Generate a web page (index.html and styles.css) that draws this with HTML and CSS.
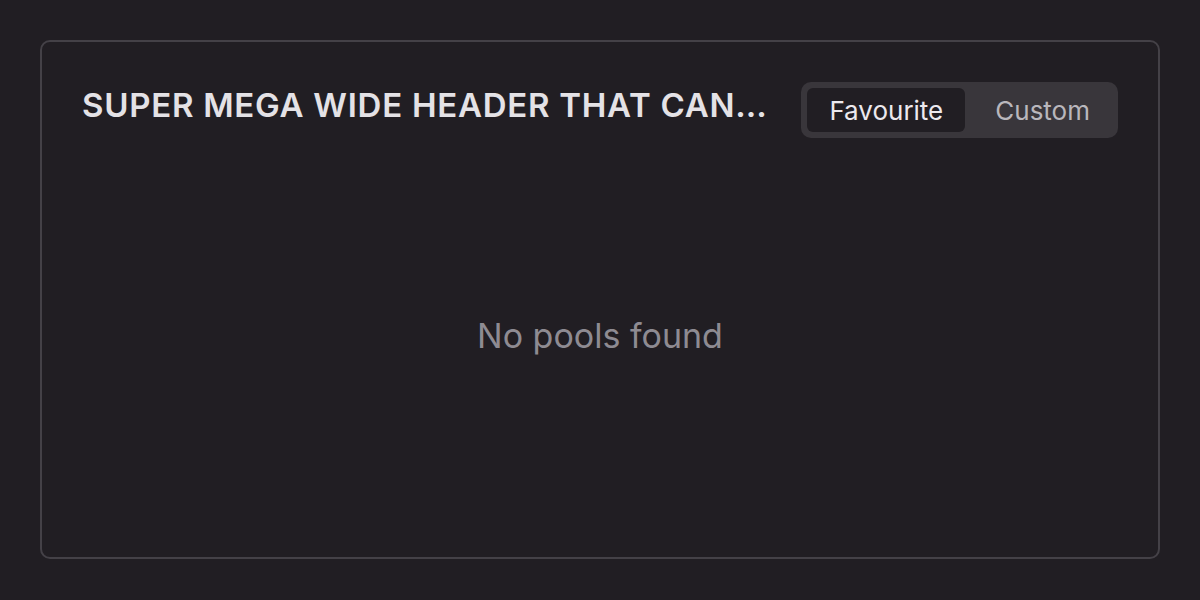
FILE: index.html
```html
<!DOCTYPE html>
<html lang="en">
<head>
<meta charset="utf-8">
<link rel="stylesheet" href="styles.css">
</head>
<body>
<div class="page">
  <section class="card">
    <header class="card-header">
      <h2 class="title">Super mega wide header that can be truncated</h2>
      <div class="toggle">
        <button class="toggle-btn active">Favourite</button>
        <button class="toggle-btn">Custom</button>
      </div>
    </header>
    <div class="card-body">
      <p class="empty">No pools found</p>
    </div>
  </section>
</div>
</body>
</html>
```
FILE: styles.css
```css
html, body {
  margin: 0;
  padding: 0;
  background: #211e23;
  font-family: Inter, "Noto Sans", sans-serif;
}
.page {
  padding: 40px;
  height: 600px;
  box-sizing: border-box;
}
.card {
  box-sizing: border-box;
  height: 519px;
  border: 2px solid #444147;
  border-radius: 10px;
  padding: 40px;
  display: flex;
  flex-direction: column;
}
.card-header {
  display: flex;
  align-items: flex-start;
  gap: 28px;
}
.title {
  flex: 1;
  min-width: 0;
  margin: 0;
  font-size: 33px;
  line-height: 1.4;
  font-weight: 600;
  letter-spacing: 0.022em;
  color: #e4e2e6;
  text-transform: uppercase;
  white-space: nowrap;
  overflow: hidden;
  text-overflow: ellipsis;
}
.toggle {
  display: flex;
  background: #39363b;
  border-radius: 10px;
  padding: 6px;
  gap: 8px;
}
.toggle-btn {
  border: none;
  background: transparent;
  font-family: inherit;
  font-size: 26px;
  color: #b9b7bc;
  height: 44px;
  padding: 0 22px;
  border-radius: 6px;
}
.toggle-btn.active {
  background: #211e23;
  color: #ece9ee;
}
.card-body {
  flex: 1;
  display: flex;
  align-items: center;
  justify-content: center;
  padding-top: 16px;
}
.empty {
  margin: 0;
  font-size: 34px;
  color: #8e8b92;
}
```
